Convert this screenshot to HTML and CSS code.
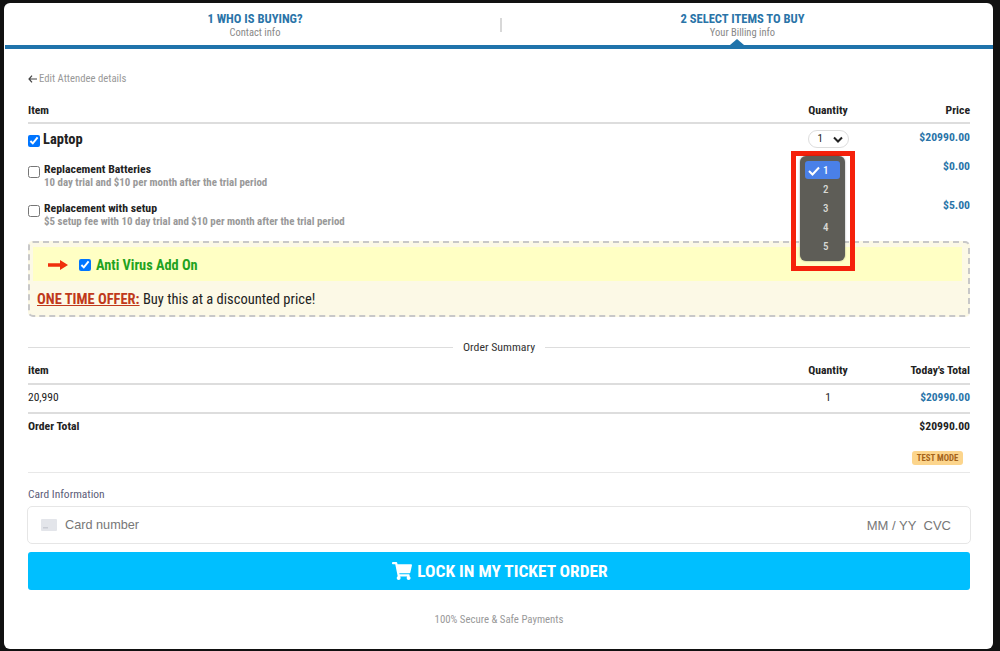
FILE: index.html
```html
<!DOCTYPE html>
<html lang="en">

<head>
    <meta charset="UTF-8">
    <meta name="viewport" content="width=device-width, initial-scale=1.0">
    <title>Select Items</title>
    <link rel="stylesheet" href="styles.css">
</head>

<body>
    <div class="modal">
        <!-- Steps -->
        <div class="steps">
            <div class="step">
                <div class="step-title">1 WHO IS BUYING?</div>
                <div class="step-sub">Contact info</div>
            </div>
            <div class="step-divider"></div>
            <div class="step step-active">
                <div class="step-title">2 SELECT ITEMS TO BUY</div>
                <div class="step-sub">Your Billing info</div>
            </div>
        </div>

        <div class="content">
            <div class="back">
                <svg class="back-arrow" width="9" height="8" viewBox="0 0 9 8"><path d="M4 .7L1 4l3 3.3M1 4h8" fill="none" stroke="#444" stroke-width="1.2"/></svg>
                Edit Attendee details
            </div>

            <!-- Item table -->
            <div class="row row-head">
                <div class="col-item">Item</div>
                <div class="col-qty">Quantity</div>
                <div class="col-price">Price</div>
            </div>

            <div class="row row-laptop">
                <div class="col-item check-line">
                    <input type="checkbox" checked>
                    <span class="laptop-name">Laptop</span>
                </div>
                <div class="col-qty qty-cell">
                    <span class="qty-select">1
                        <svg width="10" height="7" viewBox="0 0 10 7"><path d="M1 1.5l4 4 4-4" fill="none" stroke="#222" stroke-width="2"/></svg>
                    </span>
                    <div class="qty-callout">
                        <div class="qty-menu">
                            <div class="qty-option qty-selected">
                                <svg width="12" height="10" viewBox="0 0 12 10"><path d="M1 5l3.5 3.5L11 1.5" fill="none" stroke="#fff" stroke-width="2"/></svg>
                                1
                            </div>
                            <div class="qty-option">2</div>
                            <div class="qty-option">3</div>
                            <div class="qty-option">4</div>
                            <div class="qty-option">5</div>
                        </div>
                    </div>
                </div>
                <div class="col-price price-blue">$20990.00</div>
            </div>

            <div class="row row-addon">
                <div class="col-item addon">
                    <input type="checkbox">
                    <div>
                        <div class="addon-name">Replacement Batteries</div>
                        <div class="addon-desc">10 day trial and $10 per month after the trial period</div>
                    </div>
                </div>
                <div class="col-qty"></div>
                <div class="col-price price-blue">$0.00</div>
            </div>

            <div class="row row-addon">
                <div class="col-item addon">
                    <input type="checkbox">
                    <div>
                        <div class="addon-name">Replacement with setup</div>
                        <div class="addon-desc">$5 setup fee with 10 day trial and $10 per month after the trial period</div>
                    </div>
                </div>
                <div class="col-qty"></div>
                <div class="col-price price-blue">$5.00</div>
            </div>

            <!-- Offer box -->
            <div class="offer">
                <div class="offer-band">
                    <svg class="offer-arrow" width="20" height="10" viewBox="0 0 20 10"><path d="M0 3.2h12V0l8 5-8 5V6.8H0z" fill="#f0300c"/></svg>
                    <input type="checkbox" checked>
                    <span class="offer-name">Anti Virus Add On</span>
                </div>
                <div class="offer-text"><span class="offer-label">ONE TIME OFFER:</span> Buy this at a discounted price!</div>
            </div>

            <!-- Order summary -->
            <div class="summary-title"><span>Order Summary</span></div>

            <div class="row row-head row-head-summary">
                <div class="col-item">item</div>
                <div class="col-qty">Quantity</div>
                <div class="col-price">Today's Total</div>
            </div>
            <div class="row row-summary">
                <div class="col-item">20,990</div>
                <div class="col-qty">1</div>
                <div class="col-price price-blue">$20990.00</div>
            </div>
            <div class="row row-total">
                <div class="col-item">Order Total</div>
                <div class="col-qty"></div>
                <div class="col-price">$20990.00</div>
            </div>

            <div class="test-line"><span class="test-badge">TEST MODE</span></div>

            <!-- Card -->
            <div class="card-label">Card Information</div>
            <div class="card-input">
                <svg class="card-icon" width="16" height="12" viewBox="0 0 16 12"><rect width="16" height="12" rx="1" fill="#e3e5ea"/><rect x="2" y="8" width="5" height="1.5" fill="#c9ccd3"/></svg>
                <span class="card-number">Card number</span>
                <span class="card-expiry">MM / YY&nbsp; CVC</span>
            </div>

            <button class="buy-button" type="button">
                <svg width="20" height="18" viewBox="0 0 576 512"><path fill="#fff" d="M528 301l47-208c3-15-8-29-23-29H159l-9-45C147 8 137 0 126 0H24C11 0 0 11 0 24v16c0 13 11 24 24 24h70l70 343c-17 10-28 28-28 49 0 31 25 56 56 56s56-25 56-56c0-16-6-30-17-40h209c-11 10-17 24-17 40 0 31 25 56 56 56s56-25 56-56c0-22-13-41-32-50l5-24c3-15-8-29-23-29H217l-7-32h295c11 0 21-8 23-19z"/></svg>
                LOCK IN MY TICKET ORDER
            </button>

            <div class="secure">100% Secure &amp; Safe Payments</div>
        </div>
    </div>
</body>

</html>
```

FILE: styles.css
```css
/* Page frame */
* {
    box-sizing: border-box;
}

body {
    margin: 0;
    height: 651px;
    overflow: hidden;
    background: #111;
    font-family: "Roboto Condensed", "Liberation Sans Narrow", Roboto, sans-serif;
    color: #222;
}

.modal {
    margin: 3px 7px 0 4px;
    height: 646px;
    background: #fff;
    border-radius: 6px;
}

/* Steps */
.steps {
    display: flex;
    height: 46px;
    margin-left: 1px;
    border-bottom: 4px solid #1f73ab;
    padding-top: 8px;
}

.step {
    position: relative;
    width: 495px;
    padding-left: 5px;
    text-align: center;
}

.step-active {
    width: 491px;
    padding-left: 0;
    padding-right: 10px;
}

.step-active::after {
    content: "";
    position: absolute;
    left: 228px;
    bottom: 0;
    border-left: 7px solid transparent;
    border-right: 7px solid transparent;
    border-bottom: 6px solid #1f73ab;
}

.step-divider {
    width: 2px;
    height: 14px;
    margin-top: 7px;
    background: #d8d8d8;
}

.step-title {
    font-size: 12.6px;
    line-height: 15px;
    font-weight: 700;
    color: #2a74a8;
}

.step-sub {
    font-size: 10.5px;
    line-height: 13px;
    color: #888;
}

.content {
    padding: 0 23px 0 24px;
}

.back {
    display: flex;
    align-items: center;
    gap: 2px;
    margin-top: 23px;
    font-size: 10.7px;
    line-height: 14px;
    color: #999;
}

.back-arrow {
    flex: none;
}

/* Table rows */
.row {
    display: flex;
    font-size: 11.7px;
}

.col-item {
    flex: 1;
}

.col-qty {
    width: 80px;
    text-align: center;
}

.col-price {
    width: 102px;
    text-align: right;
    font-weight: 700;
}

.price-blue {
    color: #2a74a8;
}

.row-head {
    margin-top: 17px;
    height: 21px;
    border-bottom: 2px solid #ddd;
    line-height: 14px;
    font-weight: 700;
}

.row-laptop {
    height: 38px;
    padding-top: 8px;
    line-height: 14px;
}

.row-laptop .col-price {
    margin-top: -2px;
}

.check-line {
    display: flex;
    align-items: center;
    height: 16px;
}

input[type="checkbox"] {
    width: 12px;
    height: 12px;
    margin: 0 4px 0 0;
    flex: none;
}

.check-line input {
    margin: 1px 3px 0 0;
}

.laptop-name {
    font-size: 14.5px;
    font-weight: 700;
}

.qty-cell {
    position: relative;
    margin-top: -1px;
}

.qty-select {
    display: inline-flex;
    align-items: center;
    justify-content: space-between;
    width: 41px;
    height: 18px;
    padding: 0 5px 0 9px;
    border: 1px solid #ddd;
    border-radius: 9px;
    margin-top: -2px;
    font-size: 11px;
}

/* Dropdown shown open, on top of the rows */
.qty-callout {
    position: absolute;
    top: 20px;
    left: 3px;
    width: 64px;
    height: 120px;
    border: 5px solid #f5210b;
    padding: 0 0 0 4px;
    z-index: 2;
}

.qty-menu {
    width: 45px;
    height: 105px;
    padding: 5px;
    background: #5e5d57;
    border-radius: 6px;
    box-shadow: 0 0 2px rgba(0, 0, 0, .4);
}

.qty-option {
    position: relative;
    height: 19px;
    padding-left: 18px;
    line-height: 19px;
    font-size: 11px;
    font-weight: 500;
    text-align: left;
    color: #d8d8d4;
}

.qty-selected {
    height: 18px;
    margin-bottom: 1px;
    background: #4a80e8;
    border-radius: 3px;
    color: #fff;
}

.qty-selected svg {
    position: absolute;
    left: 3px;
    top: 5px;
}

.row-addon {
    height: 39px;
}

.row-addon .col-price {
    margin-top: -3px;
}

.addon {
    display: flex;
    align-items: flex-start;
}

.addon input {
    margin-top: 4px;
}

.addon-name {
    font-size: 11.8px;
    line-height: 14px;
    font-weight: 700;
}

.addon-desc {
    font-size: 10.9px;
    line-height: 14px;
    font-weight: 700;
    color: #999;
}

/* Offer box */
.offer {
    height: 76px;
    margin-top: 1px;
    padding: 4px 6px 0 3px;
    background: #fcf9e6;
    border: 2px dashed #c8c8c8;
    border-radius: 5px;
}

.offer-band {
    display: flex;
    align-items: center;
    height: 34px;
    padding: 2px 0 0 15px;
    background: #ffffc4;
}

.offer-arrow {
    margin-right: 11px;
}

.offer-band input {
    margin-right: 5px;
}

.offer-name {
    font-size: 14.3px;
    font-weight: 700;
    color: #1fa31f;
}

.offer-text {
    margin-top: 10px;
    padding-left: 4px;
    font-size: 14.5px;
    line-height: 18px;
    color: #222;
}

.offer-label {
    font-weight: 700;
    color: #c0391b;
    text-decoration: underline;
}

/* Order summary */
.summary-title {
    display: flex;
    align-items: center;
    gap: 10px;
    margin-top: 22px;
    font-size: 11.8px;
    line-height: 16px;
    color: #333;
}

.summary-title::before,
.summary-title::after {
    content: "";
    flex: 1;
    height: 1px;
    background: #ddd;
}

.row-head-summary {
    margin-top: 8px;
    height: 22px;
    border-bottom: 2px solid #ddd;
}

.row-summary {
    height: 29px;
    padding-top: 5px;
    line-height: 14px;
    font-size: 11.5px;
    border-bottom: 2px solid #ddd;
}

.row-total {
    height: 30px;
    padding-top: 5px;
    line-height: 14px;
    font-weight: 700;
}

.test-line {
    height: 29px;
    padding: 2px 7px 0 0;
    border-bottom: 1px solid #e8e8e8;
    text-align: right;
}

.test-badge {
    display: inline-block;
    width: 51px;
    height: 14px;
    background: #fcd58c;
    border-radius: 3px;
    font-size: 8.8px;
    line-height: 14px;
    font-weight: 700;
    text-align: center;
    color: #a5641a;
}

/* Card */
.card-label {
    margin-top: 14px;
    font-size: 11.5px;
    line-height: 14px;
    color: #5d5d78;
}

.card-input {
    display: flex;
    align-items: center;
    height: 38px;
    margin: 5px -1px 0 -1px;
    padding: 0 19px 0 13px;
    border: 1px solid #e6e6e6;
    border-radius: 5px;
    font-family: "Liberation Sans", Arial, sans-serif;
    font-size: 13px;
    color: #777;
}

.card-icon {
    margin-right: 8px;
}

.card-number {
    flex: 1;
    font-size: 12.7px;
}

.buy-button {
    display: flex;
    align-items: center;
    justify-content: center;
    gap: 5px;
    width: 100%;
    height: 38px;
    margin-top: 8px;
    padding-left: 8px;
    border: 0;
    border-radius: 3px;
    background: #00bfff;
    color: #fff;
    font-family: inherit;
    font-size: 17.4px;
    font-weight: 700;
}

.secure {
    margin-top: 23px;
    font-size: 10.8px;
    line-height: 14px;
    text-align: center;
    color: #999;
}
```
